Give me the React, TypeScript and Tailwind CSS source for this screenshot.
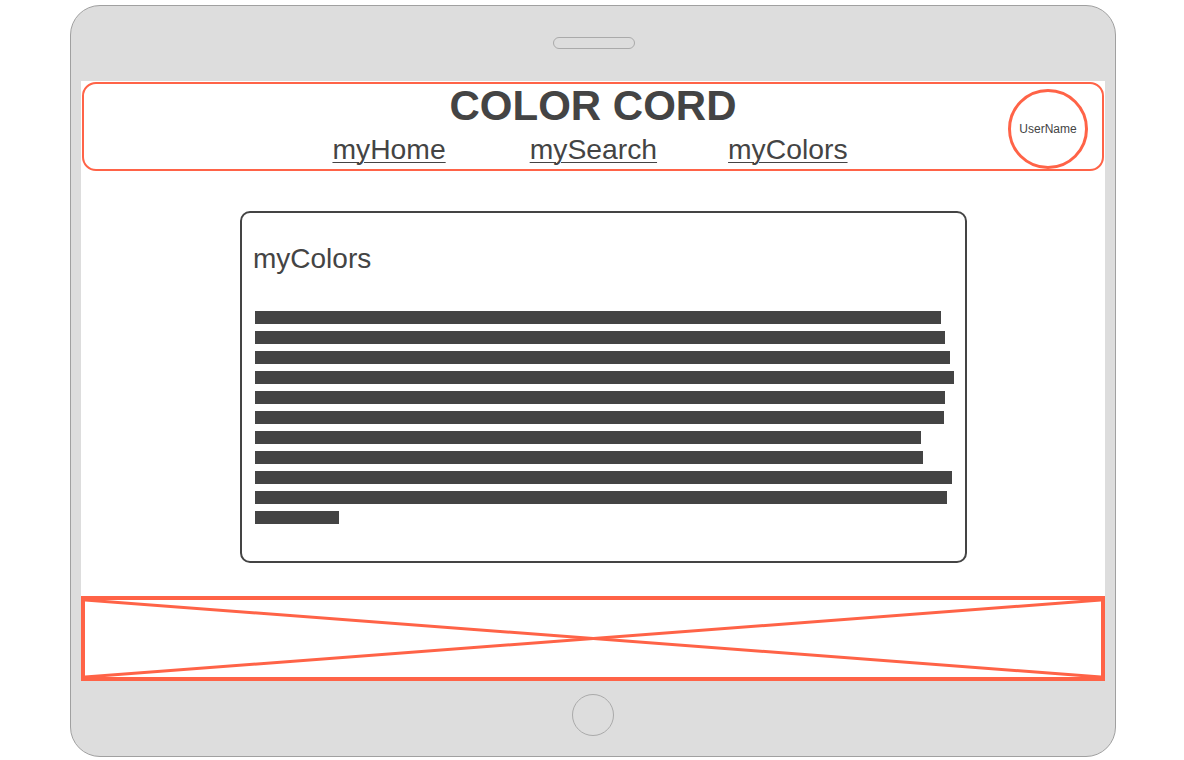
import React from "react";

const bars = [686, 690, 695, 699, 690, 689, 666, 668, 697, 692, 84];

export default function App() {
  return (
    <div className="w-[1184px] h-[760px] bg-white overflow-hidden" style={{ fontFamily: '"Liberation Sans", Arial, sans-serif' }}>
      <div className="ml-[70px] mt-[5px] w-[1046px] h-[752px] rounded-[30px] border border-[#a0a0a0] bg-[#dddddd] flex flex-col items-center">
        {/* top bezel */}
        <div className="h-[75px] w-full flex justify-center">
          <div className="mt-[31px] w-[82px] h-[12px] rounded-full border border-[#aaaaaa] ml-[2px]" />
        </div>
        {/* screen */}
        <div className="w-[1024px] h-[600px] bg-white flex flex-col">
          {/* header */}
          <div className="mt-[1px] mx-[1px] h-[89px] rounded-[14px] border-2 border-[#ff6347] grid grid-cols-[1fr_auto_1fr] text-[#444444]">
            <div />
            <div className="flex flex-col items-center">
              <div className="mt-[1px] text-[42px] leading-[42px] font-bold">COLOR CORD</div>
              <div className="mt-[6px] flex text-[28.3px] leading-[32px] pr-[6px]">
                <a className="underline underline-offset-[3px] decoration-[1px]">myHome</a>
                <a className="ml-[84px] underline underline-offset-[3px] decoration-[1px]">mySearch</a>
                <a className="ml-[71px] underline underline-offset-[3px] decoration-[1px]">myColors</a>
              </div>
            </div>
            <div className="flex justify-end items-start">
              <div className="mr-[14px] mt-[5px] w-[80px] h-[80px] rounded-full border-[3px] border-[#ff6347] flex items-center justify-center text-[12px] text-[#444444]">
                UserName
              </div>
            </div>
          </div>
          {/* card */}
          <div className="mt-[40px] ml-[159px] w-[727px] h-[352px] rounded-[10px] border-2 border-[#444444] flex flex-col">
            <div className="pl-[11px] pt-[30px] text-[28px] leading-[32px] text-[#444444]">myColors</div>
            <div className="mt-[36px] pl-[13px] flex flex-col gap-[7px]">
              {bars.map((w, i) => (
                <div key={i} className="h-[13px] bg-[#444444]" style={{ width: w }} />
              ))}
            </div>
          </div>
          {/* placeholder */}
          <div className="mt-auto h-[85px] border-4 border-[#ff6347] relative">
            <svg className="absolute inset-0 w-full h-full" viewBox="0 0 1016 77" preserveAspectRatio="none">
              <line x1="0" y1="0" x2="1016" y2="77" stroke="#ff6347" strokeWidth="3" />
              <line x1="0" y1="77" x2="1016" y2="0" stroke="#ff6347" strokeWidth="3" />
            </svg>
          </div>
        </div>
        {/* bottom bezel */}
        <div className="h-[75px] w-full flex justify-center">
          <div className="mt-[13px] w-[42px] h-[42px] rounded-full border border-[#aaaaaa]" />
        </div>
      </div>
    </div>
  );
}
